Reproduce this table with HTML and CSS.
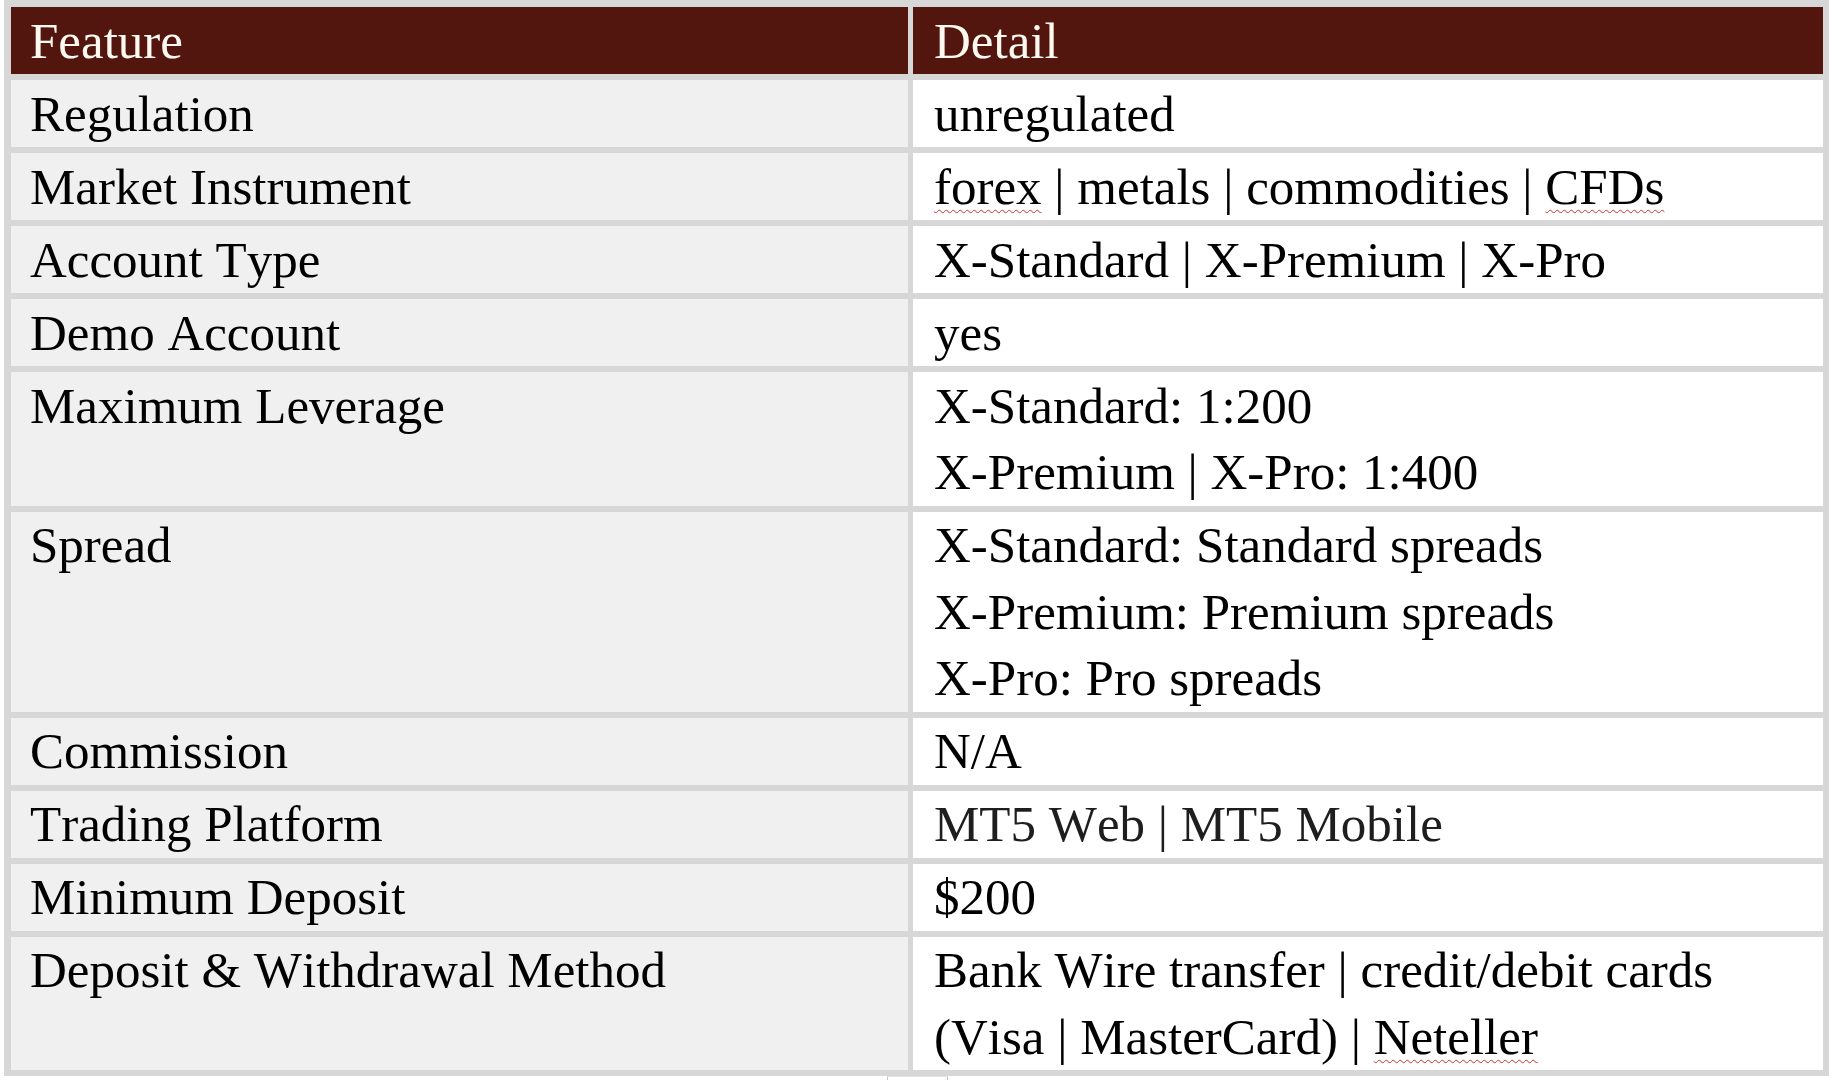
FILE: index.html
```html
<!DOCTYPE html>
<html lang="en">
<head>
<meta charset="utf-8">
<title>Feature / Detail</title>
<link rel="stylesheet" href="styles.css">
</head>
<body>
<div class="sheet">
  <div class="grid">
    <div class="cell head key">Feature</div>
    <div class="cell head val">Detail</div>

    <div class="cell key">Regulation</div>
    <div class="cell val">unregulated</div>

    <div class="cell key">Market Instrument</div>
    <div class="cell val"><span class="spell">forex</span> | metals | commodities | <span class="spell">CFDs</span></div>

    <div class="cell key">Account Type</div>
    <div class="cell val">X-Standard | X-Premium | X-Pro</div>

    <div class="cell key">Demo Account</div>
    <div class="cell val">yes</div>

    <div class="cell key">Maximum Leverage</div>
    <div class="cell val">X-Standard: 1:200<br>X-Premium | X-Pro: 1:400</div>

    <div class="cell key">Spread</div>
    <div class="cell val">X-Standard: Standard spreads<br>X-Premium: Premium spreads<br>X-Pro: Pro spreads</div>

    <div class="cell key">Commission</div>
    <div class="cell val">N/A</div>

    <div class="cell key">Trading Platform</div>
    <div class="cell val soft">MT5 Web | MT5 Mobile</div>

    <div class="cell key">Minimum Deposit</div>
    <div class="cell val">$200</div>

    <div class="cell key">Deposit &amp; Withdrawal Method</div>
    <div class="cell val">Bank Wire transfer | credit/debit cards<br>(Visa | MasterCard) | <span class="spell">Neteller</span></div>
  </div>
</div>
<div class="stub"></div>
</body>
</html>
```

FILE: styles.css
```css
html, body {
  margin: 0;
  padding: 0;
  background: #ffffff;
}

body {
  font-family: "Liberation Serif", "Times New Roman", serif;
  font-size: 51px;
  font-kerning: none;
  color: #000000;
  width: 1832px;
  height: 1080px;
  overflow: hidden;
}

.sheet {
  margin-left: 4px;
  width: 1825px;
  box-sizing: border-box;
  padding: 7px 6px 6px 7px;
  background: #d7d7d7;
}

.grid {
  display: grid;
  grid-template-columns: 897px 910px;
  column-gap: 5px;
  row-gap: 6px;
}

.cell {
  box-sizing: border-box;
  line-height: 66.5px;
  padding-top: 0.5px;
  min-height: 67px;
  white-space: nowrap;
}

.key {
  background: #f0f0f0;
  padding-left: 19px;
}

.val {
  background: #ffffff;
  padding-left: 21px;
}

.head {
  background: #52160f;
  color: #fdf8f0;
}

.soft {
  color: #1e1e1e;
}

.spell {
  text-decoration-line: underline;
  text-decoration-style: wavy;
  text-decoration-color: #d0312d;
  text-decoration-thickness: 1px;
  text-underline-offset: 5px;
}

.stub {
  margin-left: 887px;
  width: 59px;
  height: 4px;
  border: 1px solid #c4c4c4;
  border-bottom: none;
  border-top-color: #e4e4e4;
}
```
